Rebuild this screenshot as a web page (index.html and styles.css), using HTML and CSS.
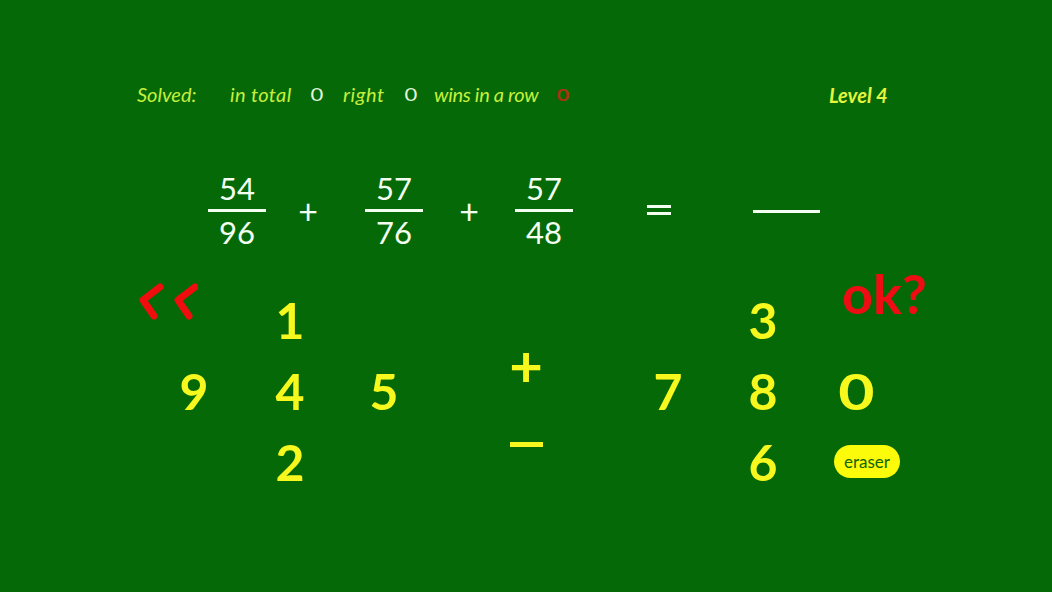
FILE: index.html
```html
<!DOCTYPE html>
<html lang="en">
<head>
<meta charset="utf-8">
<title>Fractions</title>
<link rel="stylesheet" href="styles.css">
</head>
<body>
<main class="board">
  <header class="stats">
    <span class="label solved">Solved:</span>
    <span class="label in-total">in total</span>
    <span class="count">0</span>
    <span class="label right">right</span>
    <span class="count">0</span>
    <span class="label wins">wins in a row</span>
    <span class="count bad">0</span>
    <span class="level">Level 4</span>
  </header>
  <section class="equation">
    <div class="fraction f1"><span class="num">54</span><span class="bar"></span><span class="den">96</span></div>
    <span class="op p1">+</span>
    <div class="fraction f2"><span class="num">57</span><span class="bar"></span><span class="den">76</span></div>
    <span class="op p2">+</span>
    <div class="fraction f3"><span class="num">57</span><span class="bar"></span><span class="den">48</span></div>
    <span class="equals"><i></i><i></i></span>
    <span class="answer"></span>
  </section>
  <section class="keypad">
    <button class="back" aria-label="back">
      <svg width="60" height="40" viewBox="0 0 60 40"><path d="M22 6 5 19 16 35M57 6 40 19 51 35"/></svg>
    </button>
    <span class="key c2 r1">1</span>
    <span class="key c6 r1">3</span>
    <span class="ok">ok?</span>
    <span class="key c1 r2">9</span>
    <span class="key c2 r2">4</span>
    <span class="key c3 r2">5</span>
    <div class="signs"><span class="sign">+</span><span class="minus"></span></div>
    <span class="key c5 r2">7</span>
    <span class="key c6 r2">8</span>
    <span class="key c7 r2"><span class="zero">0</span></span>
    <span class="key c2 r3">2</span>
    <span class="key c6 r3">6</span>
    <span class="eraser">eraser</span>
  </section>
</main>
</body>
</html>
```
FILE: styles.css
```css
* { box-sizing: border-box; }
html, body { margin: 0; padding: 0; }
body { width: 1052px; height: 592px; overflow: hidden; background: #056908; font-family: "Lato", "Open Sans", sans-serif; }
.board { width: 1052px; height: 592px; padding-top: 82px; display: flex; flex-direction: column; }

.stats { display: flex; align-items: center; height: 26px; padding-left: 137px; }
.label { padding-bottom: 3px; color: #c6f03c; font-size: 20px; font-style: italic; font-weight: 400; white-space: nowrap; }
.solved { width: 93px; }
.in-total { width: 80px; letter-spacing: 0.4px; }
.right { width: 61px; margin-left: 19px; letter-spacing: 0.6px; }
.wins { width: 122px; margin-left: 16px; letter-spacing: -0.3px; }
.count { display: block; width: 14px; padding-bottom: 2px; color: #e2f7d8; font-size: 17px; font-weight: 400; text-align: center; line-height: 1; transform: scaleX(1.3); }
.count.bad { color: #a8330f; font-weight: 700; }
.level { margin-left: 259px; color: #e4f53c; font-size: 20px; font-style: italic; font-weight: 700; white-space: nowrap; }

.equation { display: flex; align-items: center; height: 70px; margin-top: 69px; padding-left: 208px; color: #f3fff0; }
.fraction { display: flex; flex-direction: column; align-items: center; width: 58px; font-size: 31px; line-height: 30px; }
.num { height: 36px; }
.den { height: 34px; margin-top: 5px; }
.bar { display: block; width: 100%; height: 3px; background: #f3fff0; flex: none; }
.op { width: 22px; margin-bottom: 2px; font-size: 34px; line-height: 1; text-align: center; font-weight: 400; }
.p1 { margin-left: 31px; margin-right: 46px; }
.p2 { margin-left: 35px; margin-right: 35px; }
.equals { display: flex; flex-direction: column; gap: 4px; width: 24px; margin-left: 74px; margin-bottom: 4px; }
.equals i { display: block; height: 3px; background: #f3fff0; }
.answer { display: block; width: 67px; height: 3px; margin-left: 82px; margin-bottom: 2px; background: #f3fff0; }

.keypad { display: grid; margin-top: 18px; padding-left: 146px; grid-template-columns: 96px 96px 92px 192px 92px 98px 90px; grid-template-rows: 90px 71px 71px; color: #f6f81e; }
.key { display: flex; align-items: center; justify-content: center; height: 71px; font-size: 50px; font-weight: 700; line-height: 1; align-self: end; }
.zero { display: block; transform: scaleX(1.25); }
.c1 { grid-column: 1; } .c2 { grid-column: 2; } .c3 { grid-column: 3; } .c5 { grid-column: 5; } .c6 { grid-column: 6; } .c7 { grid-column: 7; }
.r1 { grid-row: 1; } .r2 { grid-row: 2; } .r3 { grid-row: 3; }
.back { grid-column: 1; grid-row: 1; align-self: start; justify-self: start; width: 60px; height: 40px; margin: 16px 0 0 -8px; padding: 0; border: 0; background: none; }
.back svg { display: block; }
.back path { fill: none; stroke: #f00d0d; stroke-width: 7px; stroke-linecap: round; stroke-linejoin: round; }
.ok { grid-column: 7; grid-row: 1; align-self: start; justify-self: start; margin: 4px -30px 0 30px; color: #ee0d12; font-size: 54px; font-weight: 700; line-height: 50px; white-space: nowrap; }
.signs { grid-column: 4; grid-row: 1 / 4; display: flex; flex-direction: column; align-items: center; padding-top: 69px; color: #f6f81e; }
.sign { height: 62px; font-size: 58px; font-weight: 700; line-height: 62px; }
.minus { display: block; width: 33px; height: 5px; margin-top: 46px; background: #f6f81e; }
.eraser { grid-column: 7; grid-row: 3; align-self: center; justify-self: start; display: flex; align-items: center; justify-content: center; width: 66px; height: 33px; margin-left: 22px; border-radius: 17px; background: #fbfb0a; color: #0f640c; font-size: 17px; }
```
